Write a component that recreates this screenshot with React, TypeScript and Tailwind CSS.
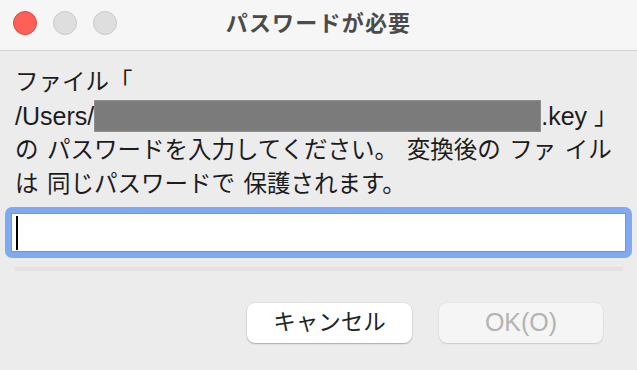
export default function App() {
  const font = { fontFamily: '"Liberation Sans", "Noto Sans CJK JP", sans-serif' };

  return (
    <div
      className="w-[637px] h-[370px] overflow-hidden bg-[#ececec] flex flex-col"
      style={font}
    >
      {/* Title bar */}
      <div className="relative h-[51px] shrink-0 bg-[#f6f6f6] border-b border-[#d3d3d3] flex items-center justify-center">
        <div className="absolute left-[13px] top-[11px] flex gap-[16px]">
          <span className="w-[24px] h-[24px] rounded-full bg-[#fe5f57] border border-[#e2463f]" />
          <span className="w-[24px] h-[24px] rounded-full bg-[#dedede] border border-[#c9c9c9]" />
          <span className="w-[24px] h-[24px] rounded-full bg-[#dedede] border border-[#c9c9c9]" />
        </div>
        <span className="text-[22px] font-bold text-[#4b4b4b] tracking-[1.2px] -mt-[4px]">
          パスワードが必要
        </span>
      </div>

      {/* Message */}
      <div className="pl-[15px] pt-[14px] text-[23.5px] leading-[34px] text-[#1c1c1c] whitespace-nowrap [word-spacing:2px]">
        <div>ファイル「</div>
        <div className="flex items-center">
          <span className="text-[25px]">/Users/</span>
          <span className="w-[447px] h-[32px] bg-[#7b7b7b] border border-[#8e8e8e]" />
          <span className="text-[25px]">.key</span>
          <span className="ml-[7px]">」</span>
        </div>
        <div>の パスワードを入力してください。 変換後の ファ イル</div>
        <div>は 同じパスワードで 保護されます。</div>
      </div>

      {/* Input */}
      <div className="mt-[6px] ml-[5px] w-[627px] h-[51px] rounded-[7px] bg-[#80aaf0] p-[6px]">
        <div className="h-full bg-white border border-[#6a98e6] flex items-center pl-[4px]">
          <span className="w-[2px] h-[34px] bg-black" />
        </div>
      </div>

      {/* Progress track */}
      <div className="mt-[9px] ml-[15px] w-[608px] h-[4px] bg-[#e2e2e2]" />

      {/* Buttons */}
      <div className="mt-[32px] flex justify-end gap-[27px] pr-[34px]">
        <button className="w-[165px] h-[40px] rounded-[8px] bg-white shadow-[0_1px_1.5px_rgba(0,0,0,0.25),0_0_0_0.5px_rgba(0,0,0,0.08)] text-[22.5px] text-[#232323]">
          キャンセル
        </button>
        <button className="w-[164px] h-[40px] rounded-[8px] bg-[#f5f5f5] shadow-[0_1px_1.5px_rgba(0,0,0,0.12),0_0_0_0.5px_rgba(0,0,0,0.05)] text-[25px] text-[#b3b3b3]">
          OK(O)
        </button>
      </div>
    </div>
  );
}
